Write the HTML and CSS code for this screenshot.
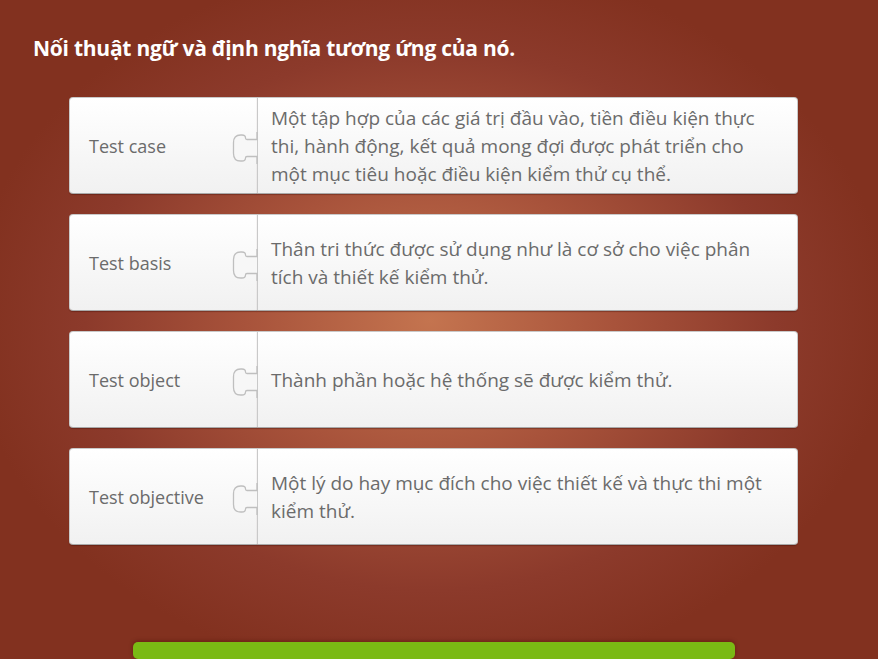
FILE: index.html
```html
<!DOCTYPE html>
<html lang="vi">
<head>
<meta charset="utf-8">
<title>Nối thuật ngữ</title>
<link rel="stylesheet" href="styles.css">
</head>
<body>
<div class="slide">
  <h1 class="title">Nối thuật ngữ và định nghĩa tương ứng của nó.</h1>
  <div class="pairs">
    <div class="pair">
      <div class="term">Test case</div>
      <div class="def">Một tập hợp của các giá trị đầu vào, tiền điều kiện thực thi, hành động, kết quả mong đợi được phát triển cho một mục tiêu hoặc điều kiện kiểm thử cụ thể.</div>
      <svg class="knob" width="28" height="32" viewBox="0 0 28 32"><path d="M26 -1 V7.5 H16 Q14.5 7.5 14.5 6 Q14.5 3 11 3 H9.5 Q2.5 3 2.5 10.5 V21.5 Q2.5 29 9.5 29 H11 Q14.5 29 14.5 26 Q14.5 24.5 16 24.5 H26 V33" /></svg>
    </div>
    <div class="pair">
      <div class="term">Test basis</div>
      <div class="def">Thân tri thức được sử dụng như là cơ sở cho việc phân tích và thiết kế kiểm thử.</div>
      <svg class="knob" width="28" height="32" viewBox="0 0 28 32"><path d="M26 -1 V7.5 H16 Q14.5 7.5 14.5 6 Q14.5 3 11 3 H9.5 Q2.5 3 2.5 10.5 V21.5 Q2.5 29 9.5 29 H11 Q14.5 29 14.5 26 Q14.5 24.5 16 24.5 H26 V33" /></svg>
    </div>
    <div class="pair">
      <div class="term">Test object</div>
      <div class="def">Thành phần hoặc hệ thống sẽ được kiểm thử.</div>
      <svg class="knob" width="28" height="32" viewBox="0 0 28 32"><path d="M26 -1 V7.5 H16 Q14.5 7.5 14.5 6 Q14.5 3 11 3 H9.5 Q2.5 3 2.5 10.5 V21.5 Q2.5 29 9.5 29 H11 Q14.5 29 14.5 26 Q14.5 24.5 16 24.5 H26 V33" /></svg>
    </div>
    <div class="pair">
      <div class="term">Test objective</div>
      <div class="def">Một lý do hay mục đích cho việc thiết kế và thực thi một kiểm thử.</div>
      <svg class="knob" width="28" height="32" viewBox="0 0 28 32"><path d="M26 -1 V7.5 H16 Q14.5 7.5 14.5 6 Q14.5 3 11 3 H9.5 Q2.5 3 2.5 10.5 V21.5 Q2.5 29 9.5 29 H11 Q14.5 29 14.5 26 Q14.5 24.5 16 24.5 H26 V33" /></svg>
    </div>
  </div>
  <div class="submit"></div>
</div>
</body>
</html>
```

FILE: styles.css
```css
html, body {
  margin: 0;
  padding: 0;
  height: 100%;
  overflow: hidden;
}
body {
  font-family: "Open Sans", "Noto Sans", sans-serif;
}
.slide {
  width: 878px;
  height: 659px;
  box-sizing: border-box;
  padding: 33px 0 0 0;
  background: radial-gradient(ellipse 460px 360px at 430px 320px, #c4744f 0%, #a8533b 40%, #8c3a2b 75%, #82311f 100%);
  display: flex;
  flex-direction: column;
  overflow: hidden;
}
.title {
  margin: 0 0 0 33px;
  font-size: 21px;
  line-height: 30px;
  font-weight: 700;
  color: #ffffff;
  letter-spacing: -0.25px;
}
.pairs {
  margin: 34px 0 0 69px;
  width: 729px;
  display: flex;
  flex-direction: column;
  gap: 20px;
}
.pair {
  position: relative;
  display: flex;
  height: 97px;
}
.term, .def {
  box-sizing: border-box;
  background: linear-gradient(#ffffff, #f1f1f1);
  border: 1px solid #c9c9c9;
  border-bottom-color: #a9a9a9;
  box-shadow: 0 1px 1px rgba(60, 10, 0, 0.35);
  color: #6b6b6b;
  display: flex;
  align-items: center;
}
.term {
  width: 188px;
  border-right: none;
  border-radius: 4px 0 0 4px;
  padding-left: 19px;
  font-size: 18px;
}
.def {
  flex: 1;
  border-radius: 0 4px 4px 0;
  padding: 0 26px 0 13px;
  font-size: 19px;
  line-height: 28px;
}
.knob {
  position: absolute;
  left: 162px;
  top: 35px;
}
.knob path {
  fill: #f7f7f7;
  stroke: #bfbfbf;
  stroke-width: 1.3;
}
.submit {
  margin: 97px 0 0 133px;
  width: 602px;
  height: 40px;
  background: #7aba14;
  border-radius: 5px;
  box-shadow: 0 -1px 4px rgba(60, 10, 0, 0.4);
}
```
